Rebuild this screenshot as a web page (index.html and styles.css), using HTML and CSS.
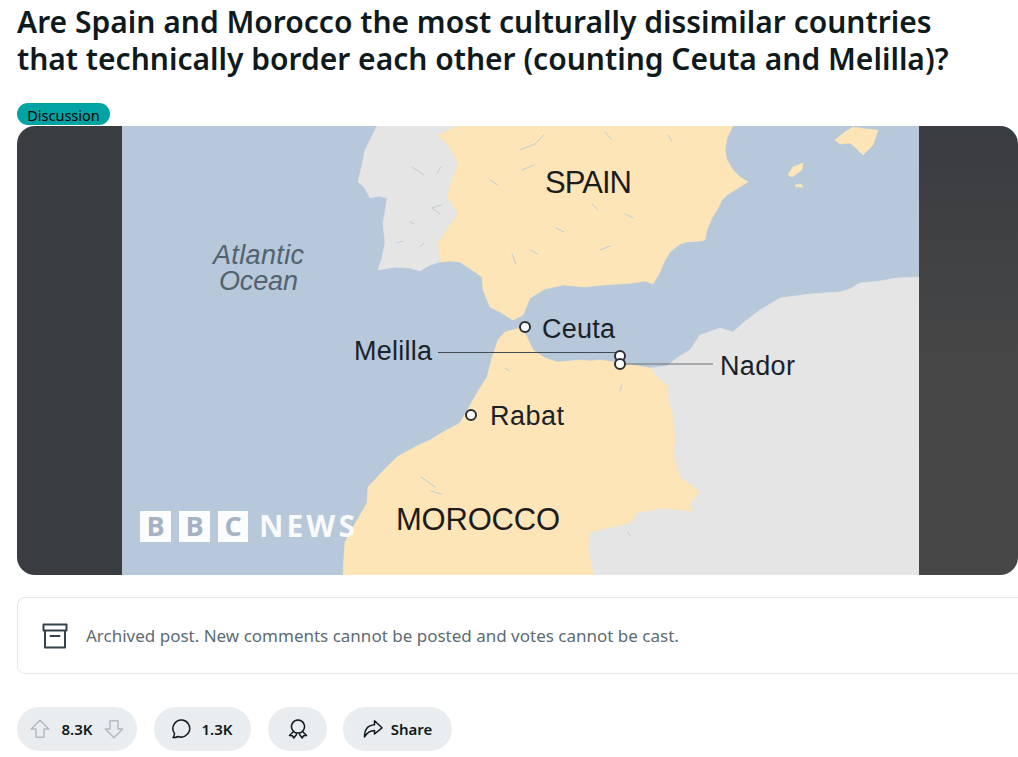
FILE: index.html
```html
<!DOCTYPE html>
<html lang="en">
<head>
<meta charset="utf-8">
<title>Reddit post</title>
<link rel="stylesheet" href="styles.css">
</head>
<body>
<main class="post">
  <h1 class="title">Are Spain and Morocco the most culturally dissimilar countries that technically border each other (counting Ceuta and Melilla)?</h1>
  <span class="flair">Discussion</span>
  <div class="media">
    <div class="side side-left"></div>
    <svg class="map" viewBox="122 126 797 449" xmlns="http://www.w3.org/2000/svg" role="img" aria-label="Map of Spain and Morocco">
      <rect x="122" y="126" width="797" height="449" fill="#b6c8da"/>
      <path class="land-grey" d="M377 126 L373 134 L365 150 L362 165 L358 182 L364 187 L370 198 L379 196 L387 198 L385 212 L383 223 L385 243 L382 258 L378 270 L395 267 L410 268 L420 271 L430 265 L440 262 L438 243 L448 228 L458 213 L447 197 L452 180 L458 163 L450 148 L438 135 L458 126 Z"/>
      <path class="land-yellow" d="M458 126 L438 135 L450 148 L458 163 L452 180 L447 197 L458 213 L448 228 L438 243 L440 262 L450 261 L460 262 L472 270 L482 277 L483 290 L490 307 L500 312 L513 320 L523 315 L530 298 L545 289 L563 285 L585 287 L603 285 L620 284 L633 283 L645 281 L653 284 L660 272 L664 262 L670 252 L680 244 L687 242 L700 241 L705 240 L707 230 L712 218 L717 210 L722 200 L727 195 L738 188 L748 182 L740 177 L733 170 L727 160 L725 150 L727 138 L733 126 Z"/>
      <path class="land-yellow" d="M835 140 L845 132 L853 127 L866 129 L878 130 L875 139 L873 145 L868 150 L863 155 L856 148 L850 143 L840 144 Z"/>
      <path class="land-yellow" d="M788 175 L793 167 L803 163 L802 170 L792 177 Z M795 185 L801 184 L803 187 L796 187 Z"/>
      <path class="land-grey" d="M919 277 L897 278 L880 281 L860 283 L850 289 L840 292 L810 294 L780 298 L760 310 L743 323 L733 332 L720 328 L700 335 L690 350 L677 358 L667 366 L650 368 L660 380 L667 385 L668 400 L672 413 L675 440 L673 453 L680 477 L700 492 L690 503 L693 511 L660 508 L637 513 L630 523 L590 532 L588 547 L593 574 L593 575 L919 575 Z"/>
      <path class="land-yellow" d="M520 328 L525 333 L533 350 L545 358 L557 362 L570 361 L580 360 L590 361 L600 360 L615 362 L633 365 L650 368 L660 380 L667 385 L668 400 L672 413 L675 440 L673 453 L680 477 L700 492 L690 503 L693 511 L660 508 L637 513 L630 523 L590 532 L588 547 L593 574 L593 575 L343 575 L344 555 L345 542 L356 522 L367 503 L368 487 L382 472 L397 457 L415 447 L430 440 L445 431 L460 423 L473 400 L480 388 L487 377 L492 358 L498 340 L505 332 Z"/>
      <g class="rivers">
        <path d="M437 173 L441 167 M412 167 L424 175 M441 205 L432 208 L440 214 M490 180 L498 185 M520 150 L535 144 L544 135 M522 170 L534 165 M605 132 L611 139 M668 135 L672 141 M625 214 L633 218 M592 204 L598 210 M600 250 L610 246 M530 250 L538 254 M512 254 L516 264 M556 228 L564 232 M410 222 L414 224 M397 243 L403 241 M420 247 L424 243 M435 487 L421 477 M431 491 L441 494 M505 368 L509 371 M620 391 L622 385 M628 532 L630 536"/>
      </g>
      <text class="label label-dark" x="545" y="193" textLength="87">SPAIN</text>
      <text class="label label-ocean" x="213" y="264" textLength="91">Atlantic</text>
      <text class="label label-ocean" x="219" y="290" textLength="79">Ocean</text>
      <text class="label label-city" x="542" y="338" textLength="73">Ceuta</text>
      <text class="label label-city" x="354" y="360" textLength="78">Melilla</text>
      <text class="label label-city" x="490" y="425" textLength="74">Rabat</text>
      <text class="label label-city" x="720" y="375" textLength="75">Nador</text>
      <text class="label label-dark" x="396" y="530" textLength="164">MOROCCO</text>
      <path class="leader" d="M438 352.5 H616"/>
      <path class="leader leader-light" d="M625 364 H713"/>
      <circle class="pin" cx="525" cy="327" r="5"/>
      <circle class="pin" cx="620" cy="356" r="5"/>
      <circle class="pin" cx="620" cy="364" r="5"/>
      <circle class="pin" cx="471" cy="415" r="5"/>
      <g class="bbc">
        <rect x="140" y="511" width="31" height="31"/>
        <rect x="179" y="511" width="31" height="31"/>
        <rect x="218" y="511" width="30" height="31"/>
        <text class="bbc-letter" x="155.500" y="536" text-anchor="middle">B</text>
        <text class="bbc-letter" x="194.500" y="536" text-anchor="middle">B</text>
        <text class="bbc-letter" x="233" y="536" text-anchor="middle">C</text>
        <text class="bbc-news" x="259" y="537" textLength="96">NEWS</text>
      </g>
    </svg>
    <div class="side side-right"></div>
  </div>
  <div class="notice">
    <svg class="notice-icon" viewBox="0 0 26 26" xmlns="http://www.w3.org/2000/svg" aria-hidden="true">
      <path d="M1.500 1.500 H24.500 V7.500 H1.500 Z M3 7.500 V24.500 H23 V7.500 M8.500 13 H17.500"/>
    </svg>
    <span>Archived post. New comments cannot be posted and votes cannot be cast.</span>
  </div>
  <div class="actions">
    <div class="pill pill-vote">
      <svg class="icon icon-grey" viewBox="0 0 20 20" aria-hidden="true"><path d="M10 1.300 L18.700 10 H14 V18.300 H6 V10 H1.300 Z"/></svg>
      <span>8.3K</span>
      <svg class="icon icon-grey" viewBox="0 0 20 20" aria-hidden="true"><path d="M10 18.700 L18.700 10 H14 V1.700 H6 V10 H1.300 Z"/></svg>
    </div>
    <div class="pill pill-comment">
      <svg class="icon" viewBox="0 0 20 20" aria-hidden="true"><path d="M10.500 1 A8.600 8.600 0 1 1 6 17.500 C4.500 18.300 2.800 18.700 1 18.600 C2 17.500 2.300 16.300 2.500 14.500 A8.600 8.600 0 0 1 10.500 1 Z"/></svg>
      <span>1.3K</span>
    </div>
    <div class="pill pill-award">
      <svg class="icon" viewBox="0 0 20 20" aria-hidden="true"><path d="M10 1 A6.500 6.500 0 1 1 9.990 1 Z M5.500 12.500 L1.500 16.500 L4.500 16.800 L5.800 19 L8.500 15.500 M14.500 12.500 L18.500 16.500 L15.500 16.800 L14.200 19 L11.500 15.500"/></svg>
    </div>
    <div class="pill pill-share">
      <svg class="icon" viewBox="0 0 20 20" aria-hidden="true"><path d="M11.500 1.800 L19 8.800 L11.500 15 V11.500 C7 11.500 4 13.500 1.500 18 C1 11 4.500 6.300 11.500 5.800 Z"/></svg>
      <span>Share</span>
    </div>
  </div>
</main>
</body>
</html>
```
FILE: styles.css
```css
* { box-sizing: border-box; }
html, body { margin: 0; height: 757px; overflow: hidden; background: #fff; }
body { font-family: "Noto Sans", "Open Sans", sans-serif; color: #0f1a1c; }
.post { padding: 0 0 0 17px; width: 1018px; }
.title {
  margin: 0;
  padding-top: 3px;
  width: 960px;
  font-size: 30px;
  line-height: 37px;
  font-weight: 600;
  height: 103px;
}
.flair {
  display: block;
  width: 93px;
  height: 22px;
  border-radius: 11px;
  background: #01a3a3;
  color: #000;
  font-size: 14.500px;
  line-height: 24px;
  text-align: center;
}
.media {
  display: flex;
  margin-top: 1px;
  width: 1001px;
  height: 449px;
  border-radius: 18px;
  overflow: hidden;
}
.side { height: 100%; }
.side-left { width: 105px; background: #393c40; }
.side-right { width: 99px; background: linear-gradient(180deg, #393c40 0%, #474747 55%, #464646 100%); }
.map { display: block; width: 797px; height: 449px; flex: none; }
.land-grey { fill: #e5e5e5; stroke: #e5e5e5; stroke-width: .6; stroke-linejoin: round; }
.land-yellow { fill: #fde5b8; stroke: #fde5b8; stroke-width: .6; stroke-linejoin: round; }
.rivers path { fill: none; stroke: #bccbd6; stroke-width: 1; stroke-linecap: round; }
.label { font-family: "Liberation Sans", Arial, sans-serif; }
.label-dark { font-size: 31px; fill: #1c1c1c; }
.label-city { font-size: 27px; fill: #1a2229; }
.label-ocean { font-size: 27px; font-style: italic; fill: #53626f; }
.leader { fill: none; stroke: #404a52; stroke-width: 1.200; }
.leader-light { stroke: #6a7278; }
.pin { fill: #fff; stroke: #2b2f33; stroke-width: 2; }
.bbc rect { fill: #fff; opacity: .95; }
.bbc-letter { font-family: "Open Sans", sans-serif; font-weight: 700; font-size: 27px; fill: #a3b3c4; }
.bbc-news { font-family: "Open Sans", sans-serif; font-weight: 700; font-size: 30px; fill: #fff; opacity: .92; }
.notice {
  display: flex;
  align-items: center;
  gap: 18px;
  margin-top: 22px;
  width: 1030px;
  height: 77px;
  padding-left: 24px;
  border: 1px solid #e4e7e9;
  border-radius: 8px;
  color: #5c6c74;
  font-size: 17px;
}
.notice-icon { width: 26px; height: 26px; flex: none; fill: none; stroke: #33434c; stroke-width: 2; stroke-linejoin: round; stroke-linecap: round; }
.actions { display: flex; gap: 17px; margin-top: 33px; }
.pill {
  display: flex;
  align-items: center;
  justify-content: center;
  height: 44px;
  border-radius: 22px;
  background: #eaedef;
  font-size: 15px;
  font-weight: 600;
  color: #0f1a1c;
}
.pill-vote { width: 120px; gap: 11px; }
.pill-comment { width: 97px; gap: 9px; }
.pill-award { width: 59px; }
.pill-share { width: 109px; gap: 8px; margin-left: -1px; }
.icon { width: 20px; height: 20px; flex: none; fill: none; stroke: #0f1a1c; stroke-width: 1.500; stroke-linejoin: round; stroke-linecap: round; }
.icon-grey { stroke: #b4b9bc; }
```
